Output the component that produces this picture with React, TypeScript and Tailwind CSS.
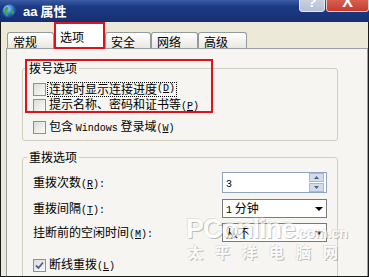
import type { ReactNode } from "react"

const M = ({ children }: { children: ReactNode }) => (
  <span className="font-['Liberation_Mono',monospace] text-[10px]">{children}</span>
)

const Key = ({ k }: { k: string }) => (
  <M>
    (<u>{k}</u>)
  </M>
)

function Box({ checked = false }: { checked?: boolean }) {
  return (
    <span className="w-[13px] h-[13px] shrink-0 border border-[#8e8f8f] bg-linear-to-br from-[#dcdcd7] to-[#fbfbf9] flex items-center justify-center">
      {checked && (
        <svg width="9" height="9" viewBox="0 0 9 9">
          <path d="M1 4.5 L3.5 7 L8 1.5" fill="none" stroke="#45609c" strokeWidth="1.8" />
        </svg>
      )}
    </span>
  )
}

function Arrow() {
  return (
    <svg width="8" height="4" viewBox="0 0 8 4" className="ml-auto mr-[3px]">
      <path d="M0 0 H8 L4 4 Z" fill="#000" />
    </svg>
  )
}

function Globe() {
  return (
    <svg width="15" height="15" viewBox="0 0 16 16">
      <defs>
        <radialGradient id="globe" cx="35%" cy="30%" r="75%">
          <stop offset="0" stopColor="#a9dcff" />
          <stop offset="0.55" stopColor="#2b6fd2" />
          <stop offset="1" stopColor="#0b2a78" />
        </radialGradient>
      </defs>
      <circle cx="8" cy="8" r="7.5" fill="url(#globe)" />
      <path d="M4 3.5c2-1 3.3 0 3 1.5S5 7 5.5 8.5 7 11 6 13.2C4.5 12.7 3 11 2.5 9S3 4.5 4 3.5z" fill="#3ea83a" />
      <path d="M10 6c1.5 0 3 1 3.2 2.5-.5 1.5-1.5 2.5-2.5 3-.5-1 .5-2-.5-3S9.5 6.5 10 6z" fill="#3ea83a" />
    </svg>
  )
}

export default function App() {
  const tabs = [
    { label: "常规", w: "w-[47px]" },
    { label: "选项", w: "w-[51px]", active: true },
    { label: "安全", w: "w-[46px]" },
    { label: "网络", w: "w-[47px]" },
    { label: "高级", w: "w-[49px]" },
  ]

  return (
    <div className="w-[369px] h-[277px] overflow-hidden relative bg-[#ECE9D8] font-['Noto_Sans_CJK_SC',sans-serif] text-[12px] leading-none text-black">
      {/* title bar */}
      <div className="h-[22px] flex items-center pl-[2px] bg-linear-to-b from-[#3c5ca6] via-[#1d3a85] via-30% to-[#162f70]">
        <Globe />
        <span className="ml-[6px] text-white font-bold text-[13px]">
          <span className="font-['Liberation_Sans',sans-serif]">aa</span> 属性
        </span>
        <div className="ml-auto self-start -mt-[9px] flex gap-[1px]">
          <div className="w-[26px] h-[21px] rounded-[3px] border border-[#e8ecf4] bg-linear-to-b from-[#d6dcea] to-[#b5bfd6] flex items-center justify-center text-white font-bold text-[15px] font-['Liberation_Sans',sans-serif]">
            ?
          </div>
          <div className="w-[43px] h-[21px] rounded-[3px] border border-[#f0d0cc] bg-linear-to-b from-[#e2786c] to-[#c73a2c] flex items-center justify-center text-white font-bold text-[16px] font-['Liberation_Sans',sans-serif]">
            X
          </div>
        </div>
      </div>

      {/* body */}
      <div className="h-[255px] border-l border-r border-b border-[#1b1b1b] pl-[5px] flex flex-col">
        <div className="h-[26px] shrink-0 flex items-end pl-[1px]">
          {tabs.map((t) =>
            t.active ? (
              <div
                key={t.label}
                className={`${t.w} h-[27px] -mb-[1px] relative z-10 border-2 border-[#e0121c] bg-white flex items-center pl-[4px] pt-[3px]`}
              >
                {t.label}
              </div>
            ) : (
              <div
                key={t.label}
                className={`${t.w} h-[16px] border border-b-0 border-[#919b9c] rounded-t-[3px] bg-linear-to-b from-white to-[#e8e7e0] flex items-center pl-[5px] pt-[2px]`}
              >
                {t.label}
              </div>
            ),
          )}
        </div>

        <div className="flex-1 min-h-0 overflow-hidden border border-b-0 border-[#9aa0a3] bg-[#f6f5f1] pl-[15px] pt-[12px]">
          {/* 拨号选项 */}
          <fieldset className="w-[316px] border border-[#d0d0bf] rounded-[3px] pb-[5px]">
            <legend className="ml-[4px] px-[2px] leading-[14px]">拨号选项</legend>
            <div className="pl-[10px] pt-[6px] flex flex-col">
              <div className="h-[16px] flex items-center">
                <Box />
                <span className="ml-[1px] h-[15px] px-[1px] border border-dotted border-black flex items-center">
                  连接时显示连接进度<Key k="D" />
                </span>
              </div>
              <div className="h-[16px] flex items-center">
                <Box />
                <span className="ml-[3px]">
                  提示名称、密码和证书等<Key k="P" />
                </span>
              </div>
              <div className="h-[16px] mt-[6px] flex items-center">
                <Box />
                <span className="ml-[3px]">
                  包含 <M>Windows</M> 登录域<Key k="W" />
                </span>
              </div>
            </div>
          </fieldset>

          {/* 重拨选项 */}
          <fieldset className="w-[316px] mt-[9px] border border-[#d0d0bf] rounded-[3px] pb-[10px]">
            <legend className="ml-[4px] px-[2px] leading-[14px]">重拨选项</legend>
            <div className="pl-[10px] pr-[10px] pt-[8px] flex flex-col">
              <div className="h-[21px] flex items-center">
                <span className="flex-1">
                  重拨次数<Key k="R" />
                  <M>:</M>
                </span>
                <div className="w-[105px] h-[21px] border border-[#8fa3bd] bg-white flex items-center">
                  <span className="pl-[3px]">
                    <M>3</M>
                  </span>
                  <div className="ml-auto mr-[2px] flex flex-col gap-[1px]">
                    <div className="w-[15px] h-[9px] border border-[#aab8d6] bg-[#d3dcef] flex items-center justify-center">
                      <svg width="5" height="3" viewBox="0 0 5 3">
                        <path d="M0 3 L2.5 0 L5 3 Z" fill="#4d6185" />
                      </svg>
                    </div>
                    <div className="w-[15px] h-[9px] border border-[#aab8d6] bg-[#d3dcef] flex items-center justify-center">
                      <svg width="5" height="3" viewBox="0 0 5 3">
                        <path d="M0 0 L5 0 L2.5 3 Z" fill="#4d6185" />
                      </svg>
                    </div>
                  </div>
                </div>
              </div>
              <div className="h-[19px] mt-[6px] flex items-center">
                <span className="flex-1">
                  重拨间隔<Key k="T" />
                  <M>:</M>
                </span>
                <div className="w-[105px] h-[19px] border border-[#7a7a7a] bg-white flex items-center">
                  <span className="pl-[3px]">
                    <M>1</M> 分钟
                  </span>
                  <Arrow />
                </div>
              </div>
              <div className="h-[19px] mt-[5px] flex items-center">
                <span className="flex-1">
                  挂断前的空闲时间<Key k="M" />
                  <M>:</M>
                </span>
                <div className="w-[105px] h-[19px] border border-[#7a7a7a] bg-white flex items-center">
                  <span className="pl-[3px]">从不</span>
                  <Arrow />
                </div>
              </div>
              <div className="h-[16px] mt-[15px] flex items-center">
                <Box checked />
                <span className="ml-[3px]">
                  断线重拨<Key k="L" />
                </span>
              </div>
            </div>
          </fieldset>
        </div>
      </div>

      {/* annotation box */}
      <div className="absolute left-[25px] top-[59px] w-[188px] h-[54px] border-2 border-[#e0121c]" />

      {/* watermark */}
      <div className="absolute left-[186px] top-[216px] pointer-events-none select-none opacity-70 text-white font-bold [text-shadow:1px_1px_0_rgba(110,110,110,0.6),-1px_-1px_0_rgba(190,190,190,0.5)]">
        <div className="flex items-baseline font-['Liberation_Sans',sans-serif]">
          <span className="text-[27px] tracking-[-1px]">PConline</span>
          <span className="text-[14px]">.com.cn</span>
        </div>
        <div className="mt-[1px] ml-[2px] text-[15px] tracking-[12px]">太平洋电脑网</div>
      </div>
    </div>
  )
}
